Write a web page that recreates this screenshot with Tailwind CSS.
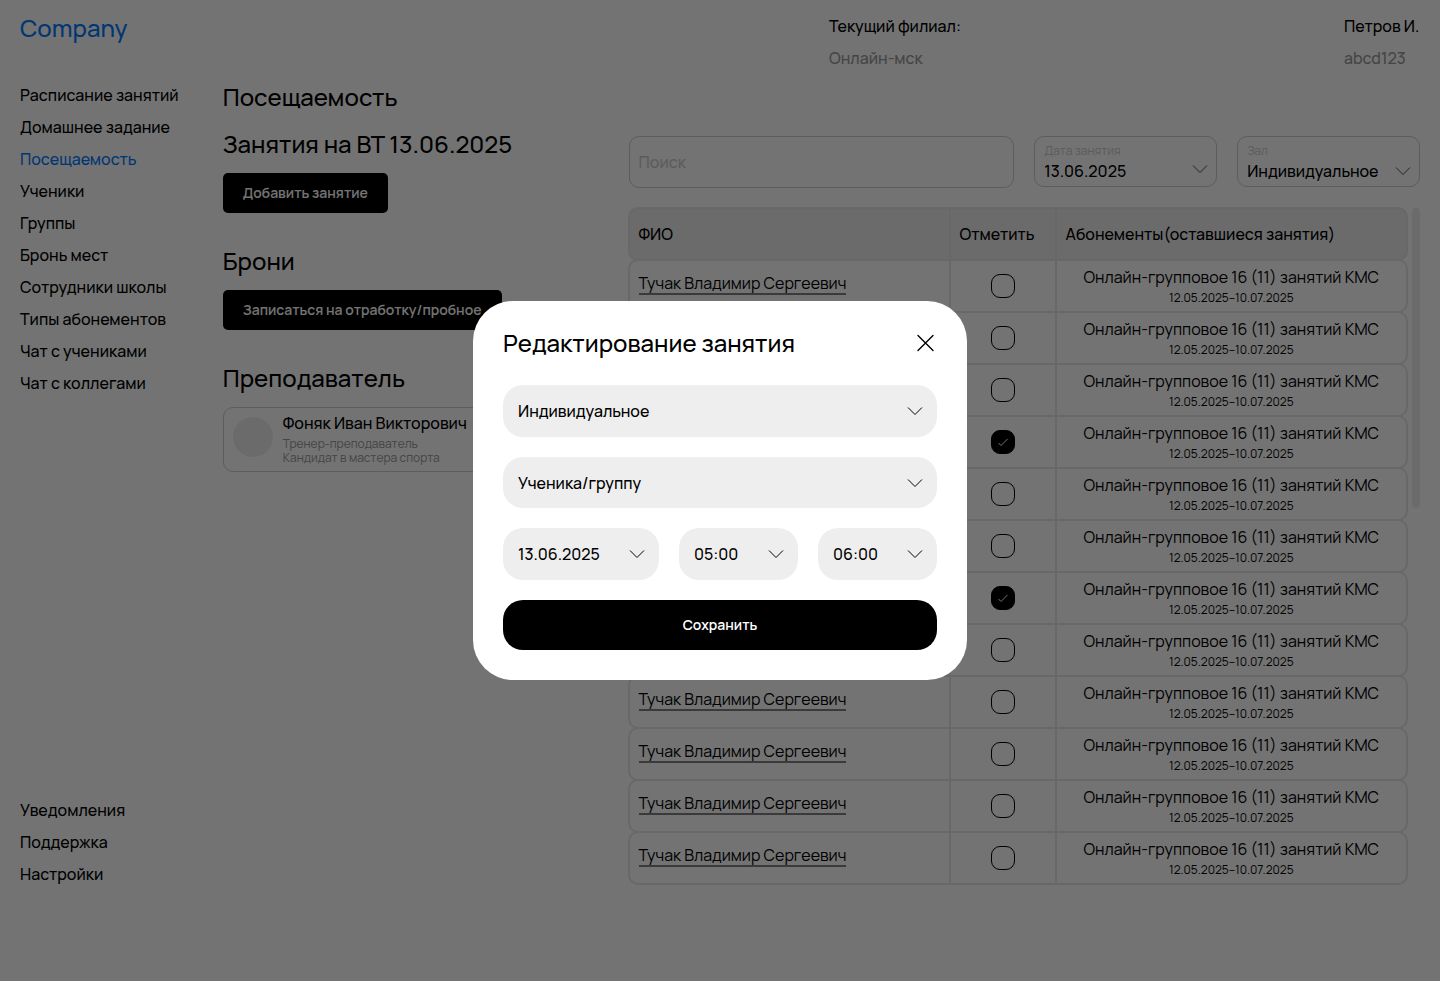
<!DOCTYPE html>
<html lang="ru">
<head>
  <meta charset="UTF-8" />
  <meta name="viewport" content="width=device-width, initial-scale=1.0" />
  <title>Посещаемость</title>
  <script src="https://cdn.jsdelivr.net/npm/@tailwindcss/browser@4"></script>
</head>
<body class="bg-white text-black text-base leading-[22px] font-medium font-['Manrope','Inter',sans-serif]">
  <div class="min-h-screen flex flex-col px-5">

    <!-- Header -->
    <header class="flex justify-between pt-[15px]">
      <a href="#" class="text-2xl leading-[26px] text-[#007aff]">Company</a>
      <div class="flex">
        <div class="w-[515px] flex flex-col gap-[10px]">
          <span>Текущий филиал:</span>
          <span class="text-[#999]">Онлайн-мск</span>
        </div>
        <div class="w-[76px] flex flex-col gap-[10px] whitespace-nowrap">
          <span>Петров И.</span>
          <span class="text-[#999]">abcd123</span>
        </div>
      </div>
    </header>

    <div class="grow grid grid-cols-7 gap-x-5">
      <!-- Sidebar -->
      <nav class="flex flex-col justify-between pt-[15px] pb-24 whitespace-nowrap">
        <div class="flex flex-col gap-[10px]">
          <a href="#">Расписание занятий</a>
          <a href="#">Домашнее задание</a>
          <a href="#" class="text-[#007aff]">Посещаемость</a>
          <a href="#">Ученики</a>
          <a href="#">Группы</a>
          <a href="#">Бронь мест</a>
          <a href="#">Сотрудники школы</a>
          <a href="#">Типы абонементов</a>
          <a href="#">Чат с учениками</a>
          <a href="#">Чат с коллегами</a>
        </div>
        <div class="flex flex-col gap-[10px]">
          <a href="#">Уведомления</a>
          <a href="#">Поддержка</a>
          <a href="#">Настройки</a>
        </div>
      </nav>

      <!-- Lesson info -->
      <main class="col-span-6 grid grid-cols-6 gap-x-5 items-start">
        <section class="col-span-2 pt-3 whitespace-nowrap">
          <h1 class="text-2xl font-medium mb-[15px]">Посещаемость</h1>
          <h2 class="text-2xl font-medium mb-[13px]">Занятия на ВТ 13.06.2025</h2>
          <button class="h-10 px-5 rounded-[5px] bg-black text-white text-sm font-semibold">Добавить занятие</button>

          <h2 class="text-2xl font-medium mt-8 mb-[13px]">Брони</h2>
          <button class="h-10 px-5 rounded-[5px] bg-black text-white text-sm font-semibold">Записаться на отработку/пробное</button>

          <h2 class="text-2xl font-medium mt-8 mb-[13px]">Преподаватель</h2>
          <div class="h-[65px] flex items-start gap-[10px] border border-[#ccc] rounded-[10px] p-[9px]">
            <div class="size-10 rounded-full bg-[#eee]"></div>
            <div class="-mt-[5px]">
              <p>Фоняк Иван Викторович</p>
              <p class="text-xs leading-[14px] mt-[3px] font-normal text-[#999]">Тренер-преподаватель<br />Кандидат в мастера спорта</p>
            </div>
          </div>
        </section>

        <!-- Students -->
        <section class="col-span-4 pt-[67px]">
          <div class="grid grid-cols-4 gap-5 items-start">
            <input type="search" aria-label="Поиск" placeholder="Поиск" class="col-span-2 h-[52px] px-[9px] border border-[#ccc] rounded-[10px] placeholder:text-[#ccc]" />
            <div class="relative h-[51px] border border-[#ccc] rounded-[10px] px-[9px] pt-[7px]">
              <label for="lesson-date" class="block text-xs leading-[14px] font-normal text-[#ccc]">Дата занятия</label>
              <select id="lesson-date" class="block w-full leading-[26px] appearance-none">
                <option>13.06.2025</option>
              </select>
              <svg class="absolute right-2 top-7 w-4 h-2 pointer-events-none" viewBox="0 0 16 8" fill="none" stroke="black" stroke-width=".7"><path d="M1 .5l7 7 7-7" /></svg>
            </div>
            <div class="relative h-[51px] border border-[#ccc] rounded-[10px] px-[9px] pt-[7px]">
              <label for="hall" class="block text-xs leading-[14px] font-normal text-[#ccc]">Зал</label>
              <select id="hall" class="block w-full leading-[26px] appearance-none">
                <option>Индивидуальное</option>
              </select>
              <svg class="absolute right-2 top-[30px] w-4 h-2 pointer-events-none" viewBox="0 0 16 8" fill="none" stroke="black" stroke-width=".7"><path d="M1 .5l7 7 7-7" /></svg>
            </div>
          </div>

          <div class="flex gap-1 mt-[19px] -ml-px">
            <table class="block grow">
              <thead class="block">
                <tr class="grid grid-cols-[321px_106px_1fr] h-[54px] border-2 border-[#e6e6e6] rounded-[10px] bg-[#eee] text-left">
                  <th class="flex items-center px-[9px] border-r-2 border-[#e6e6e6] font-medium">ФИО</th>
                  <th class="flex items-center px-[9px] border-r-2 border-[#e6e6e6] font-medium">Отметить</th>
                  <th class="flex items-center px-[9px] font-medium">Абонементы(оставшиеся занятия)</th>
                </tr>
              </thead>
              <tbody id="students" class="block"></tbody>
            </table>
            <div class="w-2 h-[300px] mt-px rounded-full bg-[#eee]"></div>
          </div>
        </section>
      </main>
    </div>
  </div>

  <!-- Edit lesson modal -->
  <div class="fixed inset-0 flex items-center justify-center bg-black/55">
    <form role="dialog" aria-labelledby="modal-title" class="w-[494px] flex flex-col gap-5 bg-white rounded-[40px] p-[30px]">
      <div class="h-6 mb-[10px] flex items-center justify-between">
        <h2 id="modal-title" class="text-2xl leading-6 font-medium">Редактирование занятия</h2>
        <button type="button" aria-label="Закрыть" class="size-6 flex items-center justify-center">
          <svg class="size-[18px]" viewBox="0 0 18 18" fill="none" stroke="black" stroke-width="1.4" stroke-linecap="round"><path d="M2 1.500l15 15M17 1.500l-15 15" /></svg>
        </button>
      </div>
      <div class="relative">
        <select aria-label="Тип занятия" class="block w-full h-[52px] px-[15px] rounded-[20px] bg-[#eee] appearance-none">
          <option>Индивидуальное</option>
        </select>
        <svg class="absolute right-[14px] top-[22px] w-4 h-2 pointer-events-none" viewBox="0 0 16 8" fill="none" stroke="black"><path d="M1 .5l7 7 7-7" /></svg>
      </div>
      <div class="relative">
        <select aria-label="Ученик или группа" class="block w-full h-[51px] px-[15px] rounded-[20px] bg-[#eee] appearance-none">
          <option>Ученика/группу</option>
        </select>
        <svg class="absolute right-[14px] top-[22px] w-4 h-2 pointer-events-none" viewBox="0 0 16 8" fill="none" stroke="black"><path d="M1 .5l7 7 7-7" /></svg>
      </div>
      <div class="grid grid-cols-[156px_1fr_1fr] gap-5">
        <div class="relative">
          <select aria-label="Дата" class="block w-full h-[52px] px-[15px] rounded-[20px] bg-[#eee] appearance-none">
            <option>13.06.2025</option>
          </select>
          <svg class="absolute right-[14px] top-[22px] w-4 h-2 pointer-events-none" viewBox="0 0 16 8" fill="none" stroke="black"><path d="M1 .5l7 7 7-7" /></svg>
        </div>
        <div class="relative">
          <select aria-label="Начало" class="block w-full h-[52px] px-[15px] rounded-[20px] bg-[#eee] appearance-none">
            <option>05:00</option>
          </select>
          <svg class="absolute right-[14px] top-[22px] w-4 h-2 pointer-events-none" viewBox="0 0 16 8" fill="none" stroke="black"><path d="M1 .5l7 7 7-7" /></svg>
        </div>
        <div class="relative">
          <select aria-label="Конец" class="block w-full h-[52px] px-[15px] rounded-[20px] bg-[#eee] appearance-none">
            <option>06:00</option>
          </select>
          <svg class="absolute right-[14px] top-[22px] w-4 h-2 pointer-events-none" viewBox="0 0 16 8" fill="none" stroke="black"><path d="M1 .5l7 7 7-7" /></svg>
        </div>
      </div>
      <button type="button" class="h-[50px] rounded-[20px] bg-black text-white text-sm font-semibold">Сохранить</button>
    </form>
  </div>

  <script>
    const students = Array.from({ length: 12 }, (_, i) => ({
      name: "Тучак Владимир Сергеевич",
      pass: "Онлайн-групповое 16 (11) занятий КМС",
      period: "12.05.2025–10.07.2025",
      present: i === 3 || i === 6
    }));

    document.getElementById("students").innerHTML = students.map(s => `
      <tr class="grid grid-cols-[321px_106px_1fr] h-[54px] -mt-[2px] border-2 border-[#e6e6e6] rounded-[10px] font-normal">
        <td class="flex items-center px-[9px] pb-1 border-r-2 border-[#e6e6e6]">
          <a href="#" class="leading-5 border-b-2 border-[#808080]">${s.name}</a>
        </td>
        <td class="flex items-center justify-center border-r-2 border-[#e6e6e6]">
          <label class="relative block size-6">
            <input type="checkbox" aria-label="Отметить" class="peer block size-6 appearance-none border border-black rounded-[9px] checked:bg-black" ${s.present ? "checked" : ""} />
            <svg class="absolute inset-0 hidden peer-checked:block" viewBox="0 0 24 24" fill="none" stroke="white"><path d="M7.500 13l2.500 2.500 6.500-6.500" /></svg>
          </label>
        </td>
        <td class="flex flex-col items-center justify-center pt-[2px]">
          <span>${s.pass}</span>
          <span class="text-xs leading-5">${s.period}</span>
        </td>
      </tr>
    `).join("");
  </script>
</body>
</html>
